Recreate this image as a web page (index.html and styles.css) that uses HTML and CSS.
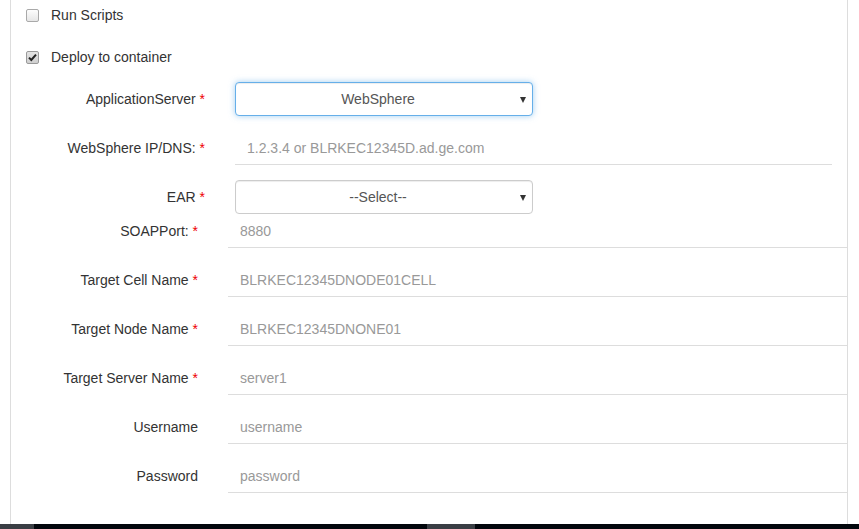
FILE: index.html
```html
<!DOCTYPE html>
<html>
<head>
<meta charset="utf-8">
<link rel="stylesheet" href="styles.css">
</head>
<body>
<div class="page">
  <div class="panel">
    <div class="check-row">
      <span class="cbox"></span>
      <span class="check-label">Run Scripts</span>
    </div>
    <div class="check-row">
      <span class="cbox checked">
        <svg width="11" height="11" viewBox="0 0 11 11"><path d="M2 5.6 L4.3 8 L9 2.6" fill="none" stroke="#222" stroke-width="2"/></svg>
      </span>
      <span class="check-label">Deploy to container</span>
    </div>

    <div class="group-a">
      <div class="row-a">
        <label class="lbl-a">ApplicationServer <span class="req">*</span></label>
        <div class="sel-wrap">
          <select class="sel focus"><option>WebSphere</option></select>
        </div>
      </div>
      <div class="row-a">
        <label class="lbl-a">WebSphere IP/DNS: <span class="req">*</span></label>
        <input class="line-input wide" placeholder="1.2.3.4 or BLRKEC12345D.ad.ge.com">
      </div>
      <div class="row-a last">
        <label class="lbl-a">EAR <span class="req">*</span></label>
        <div class="sel-wrap">
          <select class="sel"><option>--Select--</option></select>
        </div>
      </div>
    </div>

    <div class="group-b">
      <div class="row-b">
        <label class="lbl-b">SOAPPort: <span class="req">*</span></label>
        <input class="line-input full" placeholder="8880">
      </div>
      <div class="row-b">
        <label class="lbl-b">Target Cell Name <span class="req">*</span></label>
        <input class="line-input full" placeholder="BLRKEC12345DNODE01CELL">
      </div>
      <div class="row-b">
        <label class="lbl-b">Target Node Name <span class="req">*</span></label>
        <input class="line-input full" placeholder="BLRKEC12345DNONE01">
      </div>
      <div class="row-b">
        <label class="lbl-b">Target Server Name <span class="req">*</span></label>
        <input class="line-input full" placeholder="server1">
      </div>
      <div class="row-b">
        <label class="lbl-b">Username</label>
        <input class="line-input full" placeholder="username">
      </div>
      <div class="row-b">
        <label class="lbl-b">Password</label>
        <input class="line-input full" placeholder="password">
      </div>
    </div>
  </div>
  <div class="taskbar">
    <span class="tb-seg tb-a"></span>
    <span class="tb-seg tb-b"></span>
  </div>
</div>
</body>
</html>
```

FILE: styles.css
```css
* { box-sizing: border-box; }
html, body { margin: 0; padding: 0; background: #fff; }
body {
  font-family: "Liberation Sans", Arial, sans-serif;
  font-size: 14px;
  color: #333;
  overflow: hidden;
}
.page {
  height: 529px;
  display: flex;
  flex-direction: column;
}
.panel {
  flex: 1;
  margin-left: 10px;
  width: 838px;
  border-left: 1px solid #ddd;
  border-right: 1px solid #ddd;
  padding-top: 5px;
}
.check-row {
  display: flex;
  align-items: center;
  height: 20px;
  padding-left: 15px;
  margin-bottom: 22px;
}
.check-row + .check-row { margin-bottom: 15px; }
.cbox {
  width: 13px;
  height: 13px;
  border: 1px solid #a9a9a9;
  border-radius: 2px;
  background: linear-gradient(#fdfdfd, #e6e6e6);
  display: flex;
  align-items: center;
  justify-content: center;
  margin-right: 12px;
}
.cbox.checked {
  background: linear-gradient(#e4e4e4, #cfcfcf);
  border-color: #9a9a9a;
}
.check-label { line-height: 20px; }

.row-a, .row-b {
  display: flex;
  align-items: center;
  margin-bottom: 15px;
}
.row-a.last { margin-bottom: 0; }
.lbl-a, .lbl-b {
  text-align: right;
  padding-right: 15px;
  flex: none;
}
.lbl-a { width: 209px; margin-right: 15px; }
.lbl-b { width: 202px; margin-right: 15px; }
.req { color: #e00; }

.sel-wrap {
  position: relative;
  width: 298px;
  height: 34px;
}
.sel-wrap::after {
  content: "";
  position: absolute;
  right: 7px;
  top: 15px;
  border-left: 3.5px solid transparent;
  border-right: 3.5px solid transparent;
  border-top: 6px solid #333;
}
.sel {
  appearance: none;
  -webkit-appearance: none;
  width: 100%;
  height: 34px;
  border: 1px solid #ccc;
  border-radius: 4px;
  background: #fff;
  font-family: inherit;
  font-size: 14px;
  color: #555;
  padding: 0 24px 0 12px;
  text-align: center;
  text-align-last: center;
  box-shadow: inset 0 1px 1px rgba(0,0,0,.075);
  outline: none;
}
.sel.focus {
  border-color: #66afe9;
  box-shadow: inset 0 1px 1px rgba(0,0,0,.075), 0 0 6px rgba(102,175,233,.6);
}
.line-input {
  height: 34px;
  border: none;
  border-bottom: 1px solid #ddd;
  padding: 0 12px;
  font-family: inherit;
  font-size: 14px;
  color: #555;
  background: transparent;
  outline: none;
}
.line-input::placeholder { color: #999; }
.line-input.wide { width: 597px; }
.line-input.full { flex: 1; min-width: 0; }

.taskbar {
  height: 5px;
  flex: none;
  background: #02060c;
  display: flex;
}
.tb-seg { display: block; height: 100%; background: #3a3e44; }
.tb-a { width: 34px; }
.tb-b { width: 48px; margin-left: 393px; }
```
